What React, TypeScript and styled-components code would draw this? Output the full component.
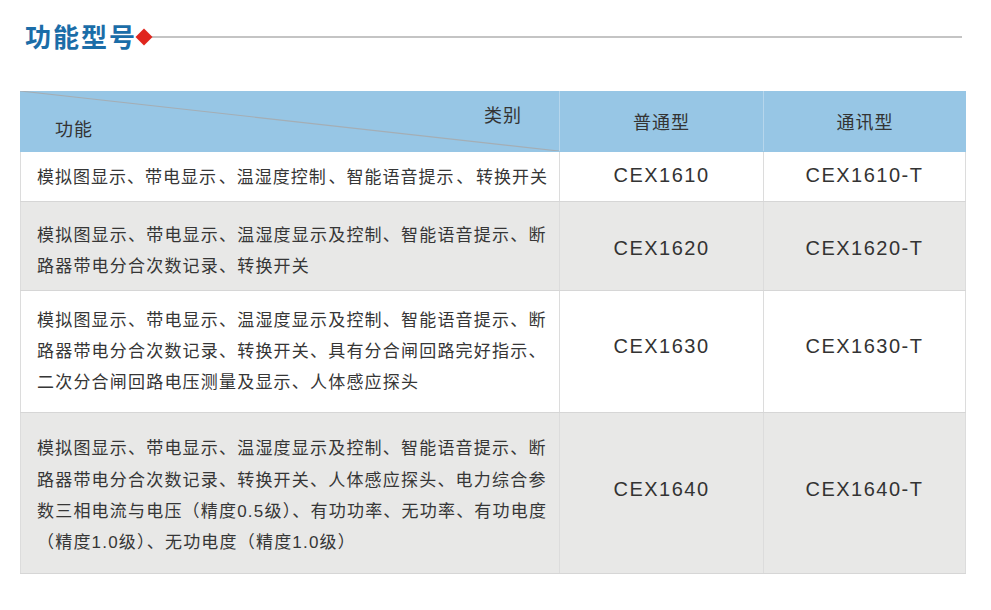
import React from "react";
import styled, { createGlobalStyle } from "styled-components";

const Global = createGlobalStyle`
  html, body { margin: 0; padding: 0; background: #ffffff; }
  body { font-family: "Liberation Sans", "Noto Sans CJK SC", sans-serif; color: #333; }
  * { box-sizing: border-box; }
`;

const Page = styled.div`
  width: 991px;
  height: 610px;
  background: #fff;
  padding-top: 21px;
`;

const TitleBar = styled.div`
  display: flex;
  align-items: center;
  height: 30px;
  padding: 0 29px 0 25px;
  margin-bottom: 40px;
`;

const Title = styled.h2`
  margin: 0;
  font-family: "Noto Sans CJK SC", sans-serif;
  font-weight: 700;
  font-size: 26px;
  line-height: 30px;
  letter-spacing: 2px;
  color: #1b6da8;
`;

const Diamond = styled.span`
  display: block;
  width: 12px;
  height: 12px;
  background: #e0261e;
  transform: rotate(45deg);
  margin: 2px 1px 0 1px;
  flex: none;
`;

const Rule = styled.div`
  flex: 1;
  height: 2px;
  margin-top: 2px;
  background: #c4c4c4;
`;

const Table = styled.div`
  margin: 0 25px 0 20px;
  width: 946px;
`;

const Row = styled.div<{ $bg: string; $h: number; $line?: boolean }>`
  display: grid;
  grid-template-columns: 539px 204px 203px;
  height: ${(p) => p.$h}px;
  background: ${(p) => p.$bg};
  border-bottom: 1px solid ${(p) => (p.$line ? "#d6d6d6" : "transparent")};
`;

const HeadCell = styled.div<{ $first?: boolean }>`
  display: flex;
  align-items: center;
  justify-content: center;
  font-family: "Noto Sans CJK SC", sans-serif;
  font-size: 18px;
  letter-spacing: 1px;
  color: #333;
  border-left: 1px solid ${(p) => (p.$first ? "transparent" : "#b6d6ec")};
`;

const Corner = styled.div`
  position: relative;
  display: flex;
  flex-direction: column;
  padding: 12px 37px 0 35px;
  font-family: "Noto Sans CJK SC", sans-serif;
  font-size: 18px;
  letter-spacing: 1px;
  color: #333;
`;

const Slash = styled.svg`
  position: absolute;
  left: 0;
  top: 0;
  width: 100%;
  height: 100%;
  pointer-events: none;
`;

const CornerTop = styled.span`
  align-self: flex-end;
  line-height: 22px;
`;

const CornerBottom = styled.span`
  align-self: flex-start;
  line-height: 22px;
  margin-top: -8px;
`;

const shiftPad = (d: number) =>
  d >= 0 ? `padding-top: ${2 * d}px;` : `padding-bottom: ${-2 * d}px;`;

const FuncCell = styled.div<{ $shift: number; $tight?: boolean }>`
  display: flex;
  flex-direction: column;
  justify-content: center;
  padding-left: 16px;
  ${(p) => shiftPad(p.$shift)}
  border-left: 1px solid #dcdcdc;
  font-family: "Liberation Sans", "Noto Sans CJK SC", sans-serif;
  font-size: 17px;
  letter-spacing: ${(p) => (p.$tight ? "1px" : "1.2px")};
  word-spacing: ${(p) => (p.$tight ? "-4px" : "0")};
  line-height: 31.3px;
  color: #363636;
  white-space: nowrap;
`;

const ModelCell = styled.div<{ $shift: number; $last?: boolean }>`
  display: flex;
  align-items: center;
  justify-content: center;
  ${(p) => shiftPad(p.$shift)}
  border-left: 1px solid #dcdcdc;
  border-right: ${(p) => (p.$last ? "1px solid #dcdcdc" : "none")};
  font-family: "Liberation Sans", sans-serif;
  font-size: 20px;
  letter-spacing: 1.5px;
  color: #333;
`;

const rows = [
  {
    lines: ["模拟图显示、带电显示 、温湿度控制 、智能语音提示 、 转换开关"],
    a: "CEX1610",
    b: "CEX1610-T",
    bg: "#ffffff",
    h: 50,
    fs: 1,
    ms: -1.5,
    tight: true,
  },
  {
    lines: [
      "模拟图显示、带电显示、温湿度显示及控制、智能语音提示、断",
      "路器带电分合次数记录、转换开关",
    ],
    a: "CEX1620",
    b: "CEX1620-T",
    bg: "#e8e8e7",
    h: 89,
    fs: 5,
    ms: 2.5,
  },
  {
    lines: [
      "模拟图显示、带电显示、温湿度显示及控制、智能语音提示、断",
      "路器带电分合次数记录、转换开关、具有分合闸回路完好指示、",
      "二次分合闸回路电压测量及显示、人体感应探头",
    ],
    a: "CEX1630",
    b: "CEX1630-T",
    bg: "#ffffff",
    h: 122,
    fs: 0,
    ms: -5.5,
  },
  {
    lines: [
      "模拟图显示、带电显示、温湿度显示及控制、智能语音提示、断",
      "路器带电分合次数记录、转换开关、人体感应探头、电力综合参",
      "数三相电流与电压（精度0.5级）、有功功率、无功率、有功电度",
      "（精度1.0级）、无功电度（精度1.0级）",
    ],
    a: "CEX1640",
    b: "CEX1640-T",
    bg: "#e8e8e7",
    h: 161,
    fs: 3,
    ms: -3.5,
  },
];

export default function App() {
  return (
    <Page>
      <Global />
      <TitleBar>
        <Title>功能型号</Title>
        <Diamond />
        <Rule />
      </TitleBar>
      <Table>
        <Row $bg="#97c6e5" $h={61}>
          <Corner>
            <Slash viewBox="0 0 539 61" preserveAspectRatio="none">
              <line x1="0" y1="0" x2="539" y2="61" stroke="#a4aeb5" strokeWidth="1.2" />
            </Slash>
            <CornerTop>类别</CornerTop>
            <CornerBottom>功能</CornerBottom>
          </Corner>
          <HeadCell>普通型</HeadCell>
          <HeadCell>通讯型</HeadCell>
        </Row>
        {rows.map((r) => (
          <Row key={r.a} $bg={r.bg} $h={r.h} $line>
            <FuncCell $shift={r.fs} $tight={r.tight}>
              {r.lines.map((l) => (
                <span key={l}>{l}</span>
              ))}
            </FuncCell>
            <ModelCell $shift={r.ms}>{r.a}</ModelCell>
            <ModelCell $shift={r.ms} $last>
              {r.b}
            </ModelCell>
          </Row>
        ))}
      </Table>
    </Page>
  );
}
